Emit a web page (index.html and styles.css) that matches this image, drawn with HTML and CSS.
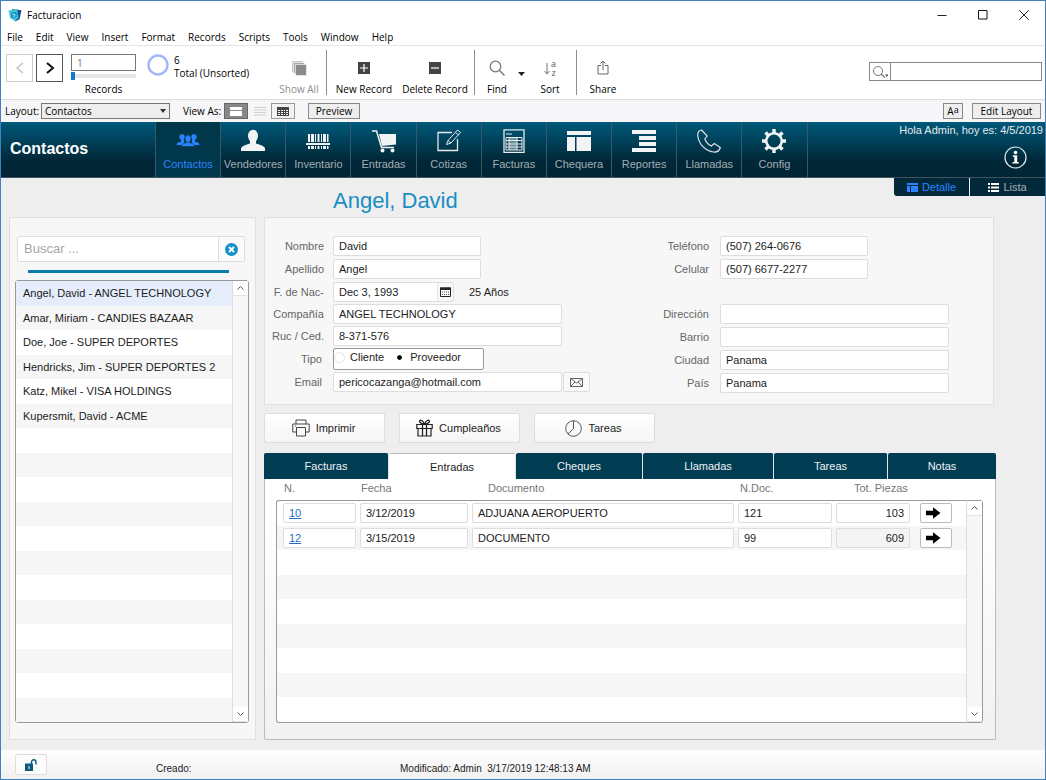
FILE: index.html
```html
<!DOCTYPE html>
<html lang="es">
<head>
<meta charset="utf-8">
<meta name="viewport" content="width=device-width, initial-scale=1">
<title>Facturacion</title>
<link rel="stylesheet" href="styles.css">
</head>
<body>
<div class="window">
  <header class="titlebar">
    <svg class="app-icon" width="14" height="14" viewBox="0 0 14 14"><path d="M4 1l9.500 1.200-2 9L7 13.500z" fill="#174f97"/><path d="M.5 2.500L9 1l1.500 8.500L7 13 2 10z" fill="#41cbd6"/><path d="M3 5l3-1.500L9 5v4L6 10.500 3 9z" fill="#1b94c9"/><path d="M4.500 6l2.500 1-1 2" stroke="#c9f6f4" fill="none"/></svg>
    <span class="app-name">Facturacion</span>
    <div class="window-controls">
      <button aria-label="Minimize"><svg width="10" height="10" viewBox="0 0 10 10"><path d="M.5 5.500h9" stroke="#222" fill="none"/></svg></button>
      <button aria-label="Maximize"><svg width="10" height="10" viewBox="0 0 10 10"><path d="M.5 .5h8.500v8.500h-8.500z" stroke="#111" fill="none"/></svg></button>
      <button aria-label="Close"><svg width="10" height="10" viewBox="0 0 10 10"><path d="M.3 .3l9.400 9.400M9.700 .3l-9.400 9.400" stroke="#222" fill="none"/></svg></button>
    </div>
  </header>
  <nav class="menubar" aria-label="Menu">
    <button>File</button><button>Edit</button><button>View</button><button>Insert</button><button>Format</button><button>Records</button><button>Scripts</button><button>Tools</button><button>Window</button><button>Help</button>
  </nav>

  <div class="toolbar">
    <div class="record-nav">
      <button class="step" aria-label="Previous" disabled><svg width="10" height="14" viewBox="0 0 10 14"><path d="M8 2L2 7l6 5" stroke="#c4c4c4" stroke-width="1.500" fill="none"/></svg></button>
      <button class="step next" aria-label="Next"><svg width="10" height="14" viewBox="0 0 10 14"><path d="M2 2l6 5-6 5" stroke="#111" stroke-width="2" fill="none"/></svg></button>
    </div>
    <div class="record-pos">
      <input class="record-input" type="text" id="recno" value="1">
      <input class="record-slider" type="range" min="1" max="6" value="1" aria-label="Record slider">
      <label for="recno">Records</label>
    </div>
    <div class="found">
      <svg width="22" height="22" viewBox="0 0 22 22"><circle cx="11" cy="11" r="9.500" fill="none" stroke="#a3b5fb" stroke-width="2.400"/></svg>
      <div class="found-text"><span>6</span><span>Total (Unsorted)</span></div>
    </div>
    <button class="tool show-all" disabled><span class="tool-icon"><svg width="16" height="16" viewBox="0 0 16 16"><path d="M1 1h11v11h-11z" fill="#c9c9c9"/><path d="M2.500 2.500h11v11h-11z" fill="#aaa" stroke="#fff" stroke-width=".6"/><path d="M4.500 4.500h11v11h-11z" fill="#8b8b8b" stroke="#fff" stroke-width=".6"/></svg></span>Show All</button>
    <span class="divider"></span>
    <button class="tool new-record"><span class="tool-icon"><svg width="12" height="12" viewBox="0 0 12 12"><path d="M0 0h12v12H0z" fill="#444"/><path d="M2 6h8M6 2v8" stroke="#fff" stroke-width="1.200"/></svg></span>New Record</button>
    <button class="tool delete-record"><span class="tool-icon"><svg width="12" height="12" viewBox="0 0 12 12"><path d="M0 0h12v12H0z" fill="#444"/><path d="M2 6h8" stroke="#fff" stroke-width="1.200"/></svg></span>Delete Record</button>
    <span class="divider"></span>
    <button class="tool find"><span class="tool-icon"><svg width="16" height="16" viewBox="0 0 16 16"><circle cx="6.500" cy="6.500" r="5.300" fill="none" stroke="#777" stroke-width="1.200"/><path d="M10.500 10.500l5 5" stroke="#777" stroke-width="1.400"/></svg></span>Find</button>
    <button class="find-menu" aria-label="Find options"><svg width="7" height="4" viewBox="0 0 7 4"><path d="M0 0h7L3.500 4z" fill="#222"/></svg></button>
    <button class="tool sort"><span class="tool-icon sort-icon"><svg width="6" height="13" viewBox="0 0 6 13"><path d="M3 1v11M.5 9l2.500 3 2.500-3" stroke="#777" fill="none"/></svg><span class="az"><span>a</span><span>z</span></span></span>Sort</button>
    <span class="divider"></span>
    <button class="tool share"><span class="tool-icon"><svg width="12" height="16" viewBox="0 0 12 16"><path d="M4 5.500H1v8.500h10V5.500H8M6 10V1M3.500 3.500L6 1l2.500 2.500" stroke="#666" fill="none"/></svg></span>Share</button>
    <div class="quick-find">
      <button aria-label="Search options"><svg width="17" height="14" viewBox="0 0 17 14"><circle cx="6" cy="6" r="4.500" fill="none" stroke="#777"/><path d="M9 9l4 3.500" stroke="#777" stroke-width="1.300"/><path d="M13 9.500h3.500L14.800 12z" fill="#555"/></svg></button>
      <input type="text" aria-label="Search">
    </div>
  </div>

  <div class="layoutbar">
    <label for="layout">Layout:</label>
    <div class="select-wrap"><select id="layout"><option>Contactos</option></select><svg width="6" height="4" viewBox="0 0 6 4"><path d="M0 0h6L3 4z" fill="#333"/></svg></div>
    <span class="view-label">View As:</span>
    <div class="views">
      <button class="view on" aria-label="Form view"><svg width="12" height="9" viewBox="0 0 12 9"><path d="M0 0h12v9H0z" fill="#fff"/><path d="M0 3.500h12" stroke="#888"/></svg></button>
      <button class="view flat" aria-label="List view"><svg width="12" height="9" viewBox="0 0 12 9"><path d="M0 .5h12M0 3h12M0 5.500h12M0 8h12" stroke="#cfcfcf"/></svg></button>
      <button class="view" aria-label="Table view"><svg width="12" height="9" viewBox="0 0 12 9"><path d="M0 0h12v9H0z" fill="#444"/><path d="M1 3h2v1H1zM4 3h2v1H4zM7 3h1v1H7zM9 3h2v1H9zM1 5h2v1H1zM4 5h2v1H4zM7 5h1v1H7zM9 5h2v1H9zM1 7h2v1H1zM4 7h2v1H4zM7 7h1v1H7zM9 7h2v1H9z" fill="#fff"/></svg></button>
    </div>
    <button class="small-btn preview">Preview</button>
    <button class="small-btn format" aria-label="Formatting">A<sup>a</sup></button>
    <button class="small-btn edit-layout">Edit Layout</button>
  </div>

  <div class="appbar">
    <h1>Contactos</h1>
    <nav class="modules" aria-label="Modulos">
      <a href="#" class="current"><svg width="24" height="24" viewBox="0 0 24 24" fill="#2b83ff"><circle cx="6" cy="8" r="2.700"/><circle cx="18" cy="8" r="2.700"/><path d="M.5 16c0-2 1.500-2.700 4.500-3.200V10h3v3l2 3zM23.500 16c0-2-1.500-2.700-4.500-3.200V10h-3v3l-2 3z"/><path d="M5.500 17.500c0-2.300 1.500-3 5-3.700V12h3v1.800c3.500.7 5 1.400 5 3.700z" stroke="#01374a" stroke-width=".6"/><ellipse cx="12" cy="9.700" rx="2.900" ry="3.700" stroke="#01374a" stroke-width=".5"/></svg>Contactos</a>
      <a href="#"><svg width="24" height="24" viewBox="0 0 24 24" fill="#f1f3f4"><ellipse cx="12" cy="7" rx="5" ry="6.300"/><path d="M9 11h6v3.500c4.500 1.500 8 2.500 9 4.500v3H0v-3c1-2 4.500-3 9-4.500z"/></svg>Vendedores</a>
      <a href="#"><svg width="24" height="24" viewBox="0 0 24 24" fill="#f1f3f4"><path d="M2 5h2v8H2zM5 5h3v8H5zM9 5h1v8H9zM11.500 5h2v8h-2zM15 5h1v8h-1zM17 5h3v8h-3zM21 5h1.500v8H21zM0 14h24v2H0zM2 17h2v3H2zM5 17h3v3H5zM9 17h1v3H9zM11.500 17h2v3h-2zM15 17h1v3h-1zM17 17h3v3h-3zM21 17h1.500v3H21z"/></svg>Inventario</a>
      <a href="#"><svg width="24" height="24" viewBox="0 0 24 24"><path d="M7 5h17v10.500L10 17z" fill="#f1f3f4"/><path d="M0 2h4.500l5 16.500H22" fill="none" stroke="#f1f3f4" stroke-width="1.500"/><circle cx="10.500" cy="21.500" r="2" fill="#f1f3f4"/><circle cx="20.500" cy="21.500" r="2" fill="#f1f3f4"/></svg>Entradas</a>
      <a href="#"><svg width="24" height="24" viewBox="0 0 24 24" fill="none" stroke="#e6eaec"><path d="M15 3.500H1v18h19.500V10" stroke-width="1.300"/><path d="M9.500 15.500l1.500-4L20.500 1l3 2.500L14 14zM18.500 3.500l3 2.500M11 11.500l3 2.500"/></svg>Cotizas</a>
      <a href="#"><svg width="24" height="24" viewBox="0 0 24 24" fill="none" stroke="#e6eaec"><path d="M2 .8h20v22.500H2z" stroke-width="1.300"/><path d="M4 5h6M4 8.500h16v12.500H4zM4 11.500h16M4 15h16M4 18h16M7 8.500V21M15 8.500V21"/><path d="M7 9h8v12H7z" stroke="none" fill="#e6eaec" fill-opacity=".45"/></svg>Facturas</a>
      <a href="#"><svg width="24" height="24" viewBox="0 0 24 24" fill="#f1f3f4"><path d="M0 2h24v4H0zM0 8h8v14H0zM9.500 8H24v14H9.500z"/></svg>Chequera</a>
      <a href="#"><svg width="24" height="24" viewBox="0 0 24 24" fill="#f1f3f4"><path d="M0 1h24v4H0zM7 7h17v4H7zM7 13h17v4H7zM0 19h24v4H0z"/></svg>Reportes</a>
      <a href="#"><svg width="24" height="24" viewBox="0 0 24 24" fill="none" stroke="#dbe3e6" stroke-width="1.200"><path d="M4.500 1C2 1.500.5 4 .8 7c1 8 7.500 15 15.700 16 3.500.3 6-1 6.800-4.500l-6-4-3 2.500c-3-1.500-5.300-4-6.500-7l2.400-3z"/></svg>Llamadas</a>
      <a href="#"><svg width="24" height="24" viewBox="0 0 24 24"><circle cx="12" cy="12" r="7.800" fill="none" stroke="#f1f3f4" stroke-width="2.600"/><path d="M12 0v4M12 20v4M0 12h4M20 12h4M3.500 3.500l3 3M17.500 17.500l3 3M20.500 3.500l-3 3M6.500 17.500l-3 3" stroke="#f1f3f4" stroke-width="3.400"/></svg>Config</a>
    </nav>
    <div class="session">
      <span>Hola Admin, hoy es: 4/5/2019</span>
      <button aria-label="Info"><svg width="23" height="23" viewBox="0 0 23 23"><circle cx="11.500" cy="11.500" r="10.500" fill="none" stroke="#dfe7ea" stroke-width="1.200"/><circle cx="11.500" cy="6.500" r="1.800" fill="#fff"/><path d="M8.800 9.300h4.400v6.700h1.500v1.400H8.500V16h1.800v-5.300H8.800z" fill="#fff"/></svg></button>
    </div>
  </div>

  <main class="content">
    <div class="view-tabs">
      <a href="#" class="current"><svg width="11" height="9" viewBox="0 0 11 9" fill="#2b83ff"><path d="M0 0h11v2H0zM0 3h3v6H0zM4 3h7v6H4z"/></svg>Detalle</a>
      <a href="#"><svg width="11" height="9" viewBox="0 0 11 9" fill="#fff"><path d="M0 0h2v2H0zM3 0h8v2H3zM0 3.500h2v2H0zM3 3.500h8v2H3zM0 7h2v2H0zM3 7h8v2H3z"/></svg>Lista</a>
    </div>
    <div class="columns">
      <aside class="panel sidebar">
        <div class="search">
          <input type="text" placeholder="Buscar ..." aria-label="Buscar">
          <button aria-label="Limpiar"><svg width="13" height="13" viewBox="0 0 13 13"><circle cx="6.500" cy="6.500" r="6.500" fill="#1590c8"/><path d="M4 4l5 5M9 4l-5 5" stroke="#fff" stroke-width="1.800"/></svg></button>
        </div>
        <div class="rule"></div>
        <div class="list-box">
          <ul class="list">
            <li class="selected">Angel, David - ANGEL TECHNOLOGY</li><li>Amar, Miriam - CANDIES BAZAAR</li><li>Doe, Joe - SUPER DEPORTES</li><li>Hendricks, Jim - SUPER DEPORTES 2</li><li>Katz, Mikel - VISA HOLDINGS</li><li>Kupersmit, David - ACME</li><li></li><li></li><li></li><li></li><li></li><li></li><li></li><li></li><li></li><li></li><li></li><li></li>
          </ul>
          <div class="scroll">
            <button aria-label="Subir"><svg width="7" height="4" viewBox="0 0 7 4"><path d="M.5 3.500l3-3 3 3" stroke="#555" fill="none"/></svg></button>
            <button aria-label="Bajar"><svg width="7" height="4" viewBox="0 0 7 4"><path d="M.5 .5l3 3 3-3" stroke="#555" fill="none"/></svg></button>
          </div>
        </div>
      </aside>

      <section class="detail">
        <h2>Angel, David</h2>
        <form class="panel form">
          <div class="half">
            <div class="group">
              <div class="field"><label for="nombre">Nombre</label><input class="short" id="nombre" value="David"></div>
              <div class="field"><label for="apellido">Apellido</label><input class="short" id="apellido" value="Angel"></div>
              <div class="field"><label for="nac">F. de Nac-</label><div class="date"><input id="nac" value="Dec 3, 1993"><button type="button" aria-label="Calendario"><svg width="11" height="10" viewBox="0 0 11 10"><path d="M.5 1h10v8.500H.5z" fill="#fff" stroke="#222"/><path d="M0 .5h11v2.500H0z" fill="#222"/><path d="M2 5h7M2 7.500h7" stroke="#444" stroke-dasharray="1 1"/></svg></button></div><span class="age">25 Años</span></div>
            </div>
            <div class="group tight">
              <div class="field"><label for="comp">Compañía</label><input class="long" id="comp" value="ANGEL TECHNOLOGY"></div>
              <div class="field"><label for="ruc">Ruc / Ced.</label><input class="long" id="ruc" value="8-371-576"></div>
              <div class="field"><span class="field-label inset" id="tipo">Tipo</span><div class="radios" role="radiogroup" aria-labelledby="tipo"><label><input type="radio" name="tipo">Cliente</label><label><input type="radio" name="tipo" checked>Proveedor</label></div></div>
              <div class="field"><label class="inset" for="email">Email</label><input class="long" id="email" value="pericocazanga@hotmail.com"><button class="mail" type="button" aria-label="Enviar email"><svg width="13" height="9" viewBox="0 0 13 9"><path d="M.5 .5h12v8H.5zM.5 .5l6 4.500 6-4.500M.5 8.500l4.500-4.500M12.500 8.500L8 4" fill="none" stroke="#555" stroke-width=".9"/></svg></button></div>
            </div>
          </div>
          <div class="half contact">
            <div class="group upper">
              <div class="field"><label for="tel">Teléfono</label><input class="short" id="tel" value="(507) 264-0676"></div>
              <div class="field"><label for="cel">Celular</label><input class="short" id="cel" value="(507) 6677-2277"></div>
            </div>
            <div class="group">
              <div class="field"><label for="dir">Dirección</label><input class="long" id="dir"></div>
              <div class="field"><label for="barrio">Barrio</label><input class="long" id="barrio"></div>
              <div class="field"><label for="ciudad">Ciudad</label><input class="long" id="ciudad" value="Panama"></div>
              <div class="field"><label for="pais">País</label><input class="long" id="pais" value="Panama"></div>
            </div>
          </div>
        </form>

        <div class="actions">
          <button><svg width="18" height="18" viewBox="0 0 18 18" fill="none" stroke="#444"><path d="M4 5V1h10v4M4 13H.8V5h16.400v8H14M4.500 8.500h9v8.500h-9zM3 7h1"/></svg>Imprimir</button>
          <button><svg width="17" height="18" viewBox="0 0 17 18" fill="none" stroke="#222"><path d="M.8 5.500h15.400v4H.8zM2 9.500h13v7.500H2z" stroke-width="1.200"/><path d="M6.500 5.500V17M10.500 5.500V17M8.500 5.500C7 1 4 .5 3.500 2S6 5 8.500 5.500C11 5 14 3.500 13.500 2S10 1 8.500 5.500" stroke-width="1.300"/></svg>Cumpleaños</button>
          <button><svg width="17" height="17" viewBox="0 0 17 17" fill="none" stroke="#555"><circle cx="8.500" cy="8.500" r="7.800"/><path d="M8.500 .7v8L3 14"/></svg>Tareas</button>
        </div>

        <div class="portal">
          <div class="tabs" role="tablist">
            <button role="tab">Facturas</button><button role="tab" aria-selected="true" class="active">Entradas</button><button role="tab">Cheques</button><button role="tab">Llamadas</button><button role="tab">Tareas</button><button role="tab">Notas</button>
          </div>
          <div class="portal-body">
            <table>
              <thead><tr><th>N.</th><th>Fecha</th><th class="doc">Documento</th><th>N.Doc.</th><th class="pieces">Tot. Piezas</th><th></th></tr></thead>
              <tbody>
                <tr><td><a href="#">10</a></td><td>3/12/2019</td><td>ADJUANA AEROPUERTO</td><td>121</td><td class="num">103</td><td class="go"><button aria-label="Abrir 10"><svg width="15" height="12" viewBox="0 0 15 12"><path d="M0 3.800h7V.3L14.500 6 7 11.700V8.200H0z"/></svg></button></td></tr>
                <tr><td><a href="#">12</a></td><td>3/15/2019</td><td>DOCUMENTO</td><td>99</td><td class="num dim">609</td><td class="go"><button aria-label="Abrir 12"><svg width="15" height="12" viewBox="0 0 15 12"><path d="M0 3.800h7V.3L14.500 6 7 11.700V8.200H0z"/></svg></button></td></tr>
                <tr></tr><tr></tr><tr></tr><tr></tr><tr></tr><tr></tr><tr></tr>
              </tbody>
            </table>
            <div class="scroll">
              <button aria-label="Subir"><svg width="7" height="4" viewBox="0 0 7 4"><path d="M.5 3.500l3-3 3 3" stroke="#555" fill="none"/></svg></button>
              <button aria-label="Bajar"><svg width="7" height="4" viewBox="0 0 7 4"><path d="M.5 .5l3 3 3-3" stroke="#555" fill="none"/></svg></button>
            </div>
          </div>
        </div>
      </section>
    </div>
  </main>

  <footer class="statusbar">
    <button aria-label="Desbloquear"><svg width="12" height="12" viewBox="0 0 12 12"><path d="M0 4.500h8V12H0z" fill="#0b5b7c"/><path d="M6.500 5V3a2.200 2.200 0 0 1 4.500 0v2.500" fill="none" stroke="#0b5b7c" stroke-width="1.400"/><path d="M3.500 7h1v3h-1z" fill="#fff"/></svg></button>
    <span class="created">Creado:</span>
    <span class="modified">Modificado: Admin&nbsp; 3/17/2019 12:48:13 AM</span>
  </footer>
</div>
</body>
</html>
```
FILE: styles.css
```css
* { box-sizing: border-box; }
body { margin: 0; font: 11px/14px "Liberation Sans", Arial, sans-serif; color: #1c1c1c; background: #fff; }
button, input, select { font: inherit; color: inherit; margin: 0; padding: 0; }
button { background: none; border: 0; display: flex; align-items: center; justify-content: center; }
svg { display: block; flex: none; }
a { color: inherit; text-decoration: none; }
h1, h2, ul { margin: 0; padding: 0; }

.window { min-height: 100vh; display: flex; flex-direction: column; border: 1px solid #3f82bd; }
.titlebar, .menubar, .toolbar, .layoutbar { font-family: "Open Sans", "Noto Sans", sans-serif; font-size: 10px; color: #000; }

/* Title bar and menu */
.titlebar { display: flex; align-items: center; height: 27px; padding-left: 7px; }
.app-name { margin-left: 5px; }
.window-controls { margin-left: auto; display: flex; padding-right: 1px; }
.window-controls button { width: 41px; height: 26px; }
.menubar { display: flex; gap: 13px; height: 18px; padding-left: 6px; border-bottom: 1px solid #e4e4e4; }

/* Toolbar */
.toolbar { display: flex; height: 53px; padding: 0 3px 0 5px; }
.record-nav { display: flex; gap: 3px; padding-top: 8px; }
.step { width: 27px; height: 28px; border: 1px solid #ccc; }
.step.next { border-color: #555; }
.record-pos { width: 65px; margin-left: 8px; padding-top: 8px; display: flex; flex-direction: column; align-items: center; }
.record-input { width: 100%; height: 17px; border: 1px solid #777; padding-left: 5px; color: #777; }
.record-slider { appearance: none; width: 100%; height: 8px; margin-top: 1px; background: linear-gradient(#e5e5e5, #e5e5e5) center / 100% 4px no-repeat; }
.record-slider::-webkit-slider-thumb { appearance: none; width: 4px; height: 8px; background: #1279cf; }
.record-pos label { margin-top: 2px; }
.found { display: flex; gap: 5px; margin-left: 11px; padding-top: 8px; width: 116px; white-space: nowrap; }
.found-text { display: flex; flex-direction: column; line-height: 13px; }
.tool { flex-direction: column; justify-content: flex-start; padding-top: 11px; white-space: nowrap; line-height: 20px; }
.tool-icon { height: 22px; display: flex; align-items: center; }
.tool:disabled { color: #8d8d8d; }
.show-all { width: 44px; margin-left: 14px; }
.divider { width: 1px; background: #8e8e8e; margin: 4px 0; margin-left: 5px; }
.new-record { width: 60px; margin-left: 7px; }
.delete-record { width: 68px; margin-left: 7px; }
.find { width: 24px; margin-left: 10px; }
.find-menu { width: 12px; padding-top: 26px; margin-left: 6px; align-items: flex-start; }
.sort { width: 28px; margin-left: 9px; }
.sort-icon { gap: 1px; }
.az { display: flex; flex-direction: column; font-size: 9px; line-height: 9px; color: #555; }
.sort + .divider { margin-left: 12px; }
.share { width: 32px; margin-left: 10px; }
.quick-find { display: flex; width: 173px; height: 19px; margin: 16px 0 0 auto; border: 1px solid #888; }
.quick-find button { width: 21px; border-right: 1px solid #888; }
.quick-find input { flex: 1; min-width: 0; border: 0; padding: 0 4px; }

/* Layout bar */
.layoutbar { display: flex; align-items: center; height: 23px; padding: 0 4px; background: #f6f6f8; border-top: 1px solid #dcdcdc; }
.layoutbar > label { width: 36px; white-space: nowrap; }
.select-wrap { position: relative; width: 129px; }
.select-wrap select { display: block; appearance: none; width: 100%; height: 16px; padding: 0 3px; border: 1px solid #777; border-radius: 0; background: #eee; line-height: 14px; }
.select-wrap svg { position: absolute; right: 4px; top: 6px; pointer-events: none; }
.view-label { width: 41px; margin-left: 13px; white-space: nowrap; }
.views { display: flex; }
.view { width: 24px; height: 16px; border: 1px solid #999; background: #f2f2f2; }
.view.on { background: #888; border-color: #666; }
.view.flat { border-color: transparent; background: none; width: 23px; }
.small-btn { height: 16px; border: 1px solid #888; background: #eee; white-space: nowrap; }
.preview { width: 52px; margin-left: 13px; }
.format { width: 20px; margin-left: auto; }
.format sup { font-size: 9px; line-height: 9px; margin-bottom: 3px; }
.edit-layout { width: 69px; margin-left: 9px; }

/* Application bar */
.appbar { display: flex; height: 56px; background: linear-gradient(#00597b, #004159 35%, #012838 70%, #012533); border-bottom: 1px solid #3e5560; color: #fff; }
.appbar h1 { flex: 0 0 154px; padding-left: 9px; font-size: 16px; line-height: 54px; }
.modules { flex: 0 0 62.5%; display: grid; grid-template-columns: repeat(10, minmax(0, 1fr)); border-left: 1px solid #33596a; }
.modules a { display: flex; flex-direction: column; align-items: center; padding-top: 7px; gap: 4px; color: #a2adb3; border-right: 1px solid #33596a; }
.modules a.current { background: #01374a; color: #2b83ff; }
.session { flex: 1; display: flex; flex-direction: column; align-items: flex-end; padding: 1px 2px 0 0; white-space: nowrap; color: #e3e9ec; }
.session button { margin: 9px 16px 0 0; }

/* Content */
.content { flex: 1; display: flex; background: #eee; padding: 0 49px 10px 8px; position: relative; }
.view-tabs { position: absolute; right: 0; top: 0; display: flex; gap: 1px; }
.view-tabs a { display: flex; align-items: center; justify-content: center; gap: 4px; width: 75px; height: 18px; background: #01293a; color: #a7b0b5; }
.view-tabs a.current { color: #2b83ff; border-bottom-left-radius: 3px; }
.columns { flex: 1; display: flex; gap: 8px; }
.panel { background: #f7f7f7; border: 1px solid #e0e0e0; }
.sidebar { flex: 0 0 247px; margin-top: 39px; padding: 18px 6px 16px 5px; display: flex; flex-direction: column; }
.search { display: flex; margin: 0 4px 0 2px; height: 26px; }
.search input { flex: 1; min-width: 0; border: 1px solid #ddd; border-radius: 2px 0 0 2px; padding: 0 6px; font-size: 13px; background: #fff; }
.search input::placeholder { color: #a5a5a5; }
.search button { width: 26px; border: 1px solid #ddd; border-left: 0; border-radius: 0 2px 2px 0; background: #fafafa; }
.rule { height: 3px; background: #0b7cab; margin: 8px 20px 7px 13px; }
.list-box { flex: 1; display: flex; border: 1px solid #999; border-radius: 3px; background: #fff; }
.list { flex: 1; list-style: none; display: grid; grid-auto-rows: minmax(22px, 1fr); }
.list li { display: flex; align-items: center; padding-left: 7px; white-space: nowrap; }
.list li:nth-child(even), tbody tr:nth-child(even) { background: #f6f6f6; }
.list li.selected { background: #e5edfa; }
.scroll { width: 16px; display: flex; flex-direction: column; justify-content: space-between; background: #f7f7f7; border-left: 1px solid #ddd; border-radius: 0 3px 3px 0; }
.scroll button { height: 15px; background: #fff; border-bottom: 1px solid #e3e3e3; }

.detail { flex: 1; min-width: 0; display: flex; flex-direction: column; }
.detail h2 { height: 39px; padding-left: 69px; font-size: 22px; line-height: 46px; font-weight: 400; color: #188fc4; }
.form { display: grid; grid-template-columns: 1fr 1fr; height: 188px; padding-top: 18px; margin-right: 2px; }
.half, .group { display: flex; flex-direction: column; }
.half { gap: 2px; }
.group { gap: 3px; }
.group.tight { gap: 2px; }
.group.upper { min-height: 66px; }
.field { display: flex; align-items: center; min-height: 20px; }
.field > label, .field-label { width: 59px; margin-right: 9px; text-align: right; color: #666; white-space: nowrap; }
.contact .field > label { width: 80px; margin-right: 11px; }
.field > .inset { padding-right: 2px; }
.field > input, .date { height: 20px; border: 1px solid #ddd; border-radius: 2px; background: #fff; }
.field > input { padding: 0 5px; }
.short { width: 148px; }
.long { width: 229px; }
.date { display: flex; width: 121px; }
.date input { flex: 1; min-width: 0; border: 0; background: none; padding: 0 5px; }
.date button { width: 16px; border-left: 1px solid #e3e3e3; background: #f7f7f7; }
.age { margin-left: 15px; }
.radios { display: flex; gap: 10px; width: 151px; height: 22px; padding: 0 0 4px; border: 1px solid #999; border-radius: 2px; background: #fff; }
.radios label { display: flex; align-items: center; gap: 5px; }
.radios input { appearance: none; width: 11px; height: 11px; border: 1px solid #e3e3e3; border-radius: 50%; }
.radios input:checked { border: 3px solid #fff; background: #000; background-clip: padding-box; outline: 0; }
.mail { width: 27px; height: 20px; margin-left: 1px; border: 1px solid #ddd; border-radius: 2px; background: #fafafa; }

.actions { display: flex; gap: 14px; margin: 8px 0 10px; }
.actions button { width: 121px; height: 30px; gap: 6px; padding-right: 2px; border: 1px solid #ddd; border-radius: 2px; background: linear-gradient(#fff, #f5f5f5); }

.portal { flex: 1; display: flex; flex-direction: column; border: 1px solid #bbb; border-top: 0; border-radius: 2px; background: linear-gradient(#fff 20%, #f2f2f2); }
.tabs { display: grid; grid-template-columns: 125fr 127fr 127fr 131fr 114fr 108fr; margin: 0 -1px; }
.tabs button { height: 26px; background: #003c52; color: #eef2f4; border-right: 1px solid #dde3e6; border-radius: 2px 2px 0 0; }
.tabs button:last-child { border-right: 0; }
.tabs .active { background: #fff; color: #1c1c1c; border-top: 1px solid #bbb; }
.portal-body { flex: 1; display: flex; padding: 0 12px 16px 11px; }
table { flex: 1; display: flex; flex-direction: column; }
thead { display: block; }
thead tr, tbody tr { display: grid; grid-template-columns: 73px 108px minmax(0, 1fr) 94px 74px 32px; column-gap: 4px; padding: 0 20px 0 6px; align-items: center; }
th { font-weight: 400; text-align: left; color: #777; padding: 0 0 0 2px; line-height: 19px; height: 21px; }
th.doc { padding-left: 17px; }
th.pieces { padding-left: 18px; white-space: nowrap; }
tbody { flex: 1; display: grid; grid-auto-rows: minmax(22px, 1fr); border: 1px solid #999; border-right: 0; border-radius: 3px 0 0 3px; background: #fff; }
td { height: 20px; padding: 0 5px; border: 1px solid #ddd; border-radius: 2px; background: #fff; line-height: 19px; }
td a { color: #2a6fc4; text-decoration: underline; }
td.num { text-align: right; }
td.dim { background: #f4f4f4; }
td.go { padding: 0; border: 0; background: none; margin-left: 6px; margin-right: -6px; }
td.go button { width: 100%; height: 20px; border: 1px solid #bbb; border-radius: 2px; background: #fff; padding-right: 6px; }
.portal .scroll { margin-top: 21px; width: 17px; border: 1px solid #999; border-left-color: #ddd; }

/* Status bar */
.statusbar { display: flex; height: 29px; padding-left: 14px; background: linear-gradient(#fff, #f0f0f0); font-size: 10px; line-height: 38px; white-space: nowrap; }
.statusbar button { width: 32px; height: 21px; margin-top: 4px; border: 1px solid #ddd; border-radius: 2px; background: #fcfcfc; }
.created { width: 244px; margin-left: 109px; }
```
